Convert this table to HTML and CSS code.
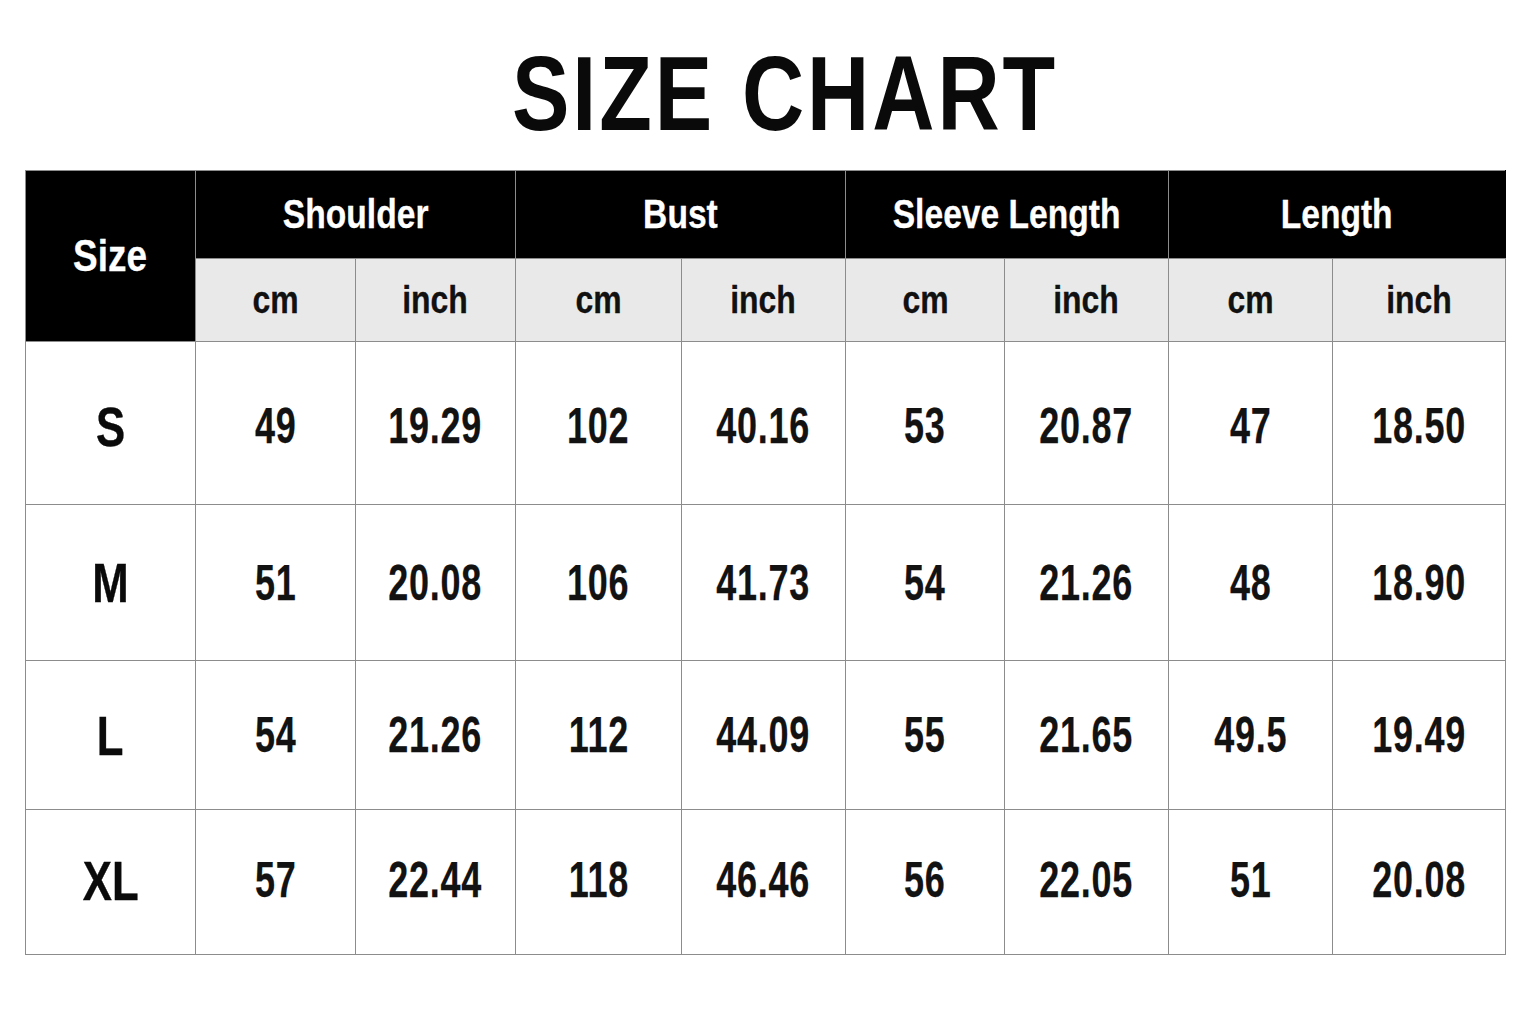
FILE: index.html
```html
<!DOCTYPE html>
<html>
<head>
<meta charset="utf-8">
<link rel="stylesheet" href="styles.css">
</head>
<body>
<div class="page">
  <h1 class="title"><span>SIZE CHART</span></h1>
  <table class="chart">
    <colgroup>
      <col class="c-size"><col class="c1"><col class="c2"><col class="c3"><col class="c4"><col class="c5"><col class="c6"><col class="c7"><col class="c8">
    </colgroup>
    <thead>
      <tr class="h1">
        <th class="size-head" rowspan="2"><span>Size</span></th>
        <th colspan="2" class="group"><span>Shoulder</span></th>
        <th colspan="2" class="group"><span>Bust</span></th>
        <th colspan="2" class="group"><span>Sleeve Length</span></th>
        <th colspan="2" class="group"><span>Length</span></th>
      </tr>
      <tr class="h2">
        <th><span>cm</span></th><th><span>inch</span></th><th><span>cm</span></th><th><span>inch</span></th><th><span>cm</span></th><th><span>inch</span></th><th><span>cm</span></th><th><span>inch</span></th>
      </tr>
    </thead>
    <tbody>
      <tr class="r-s">
        <td class="sz"><span>S</span></td><td><span>49</span></td><td><span>19.29</span></td><td><span>102</span></td><td><span>40.16</span></td><td><span>53</span></td><td><span>20.87</span></td><td><span>47</span></td><td><span>18.50</span></td>
      </tr>
      <tr class="r-m">
        <td class="sz"><span>M</span></td><td><span>51</span></td><td><span>20.08</span></td><td><span>106</span></td><td><span>41.73</span></td><td><span>54</span></td><td><span>21.26</span></td><td><span>48</span></td><td><span>18.90</span></td>
      </tr>
      <tr class="r-l">
        <td class="sz"><span>L</span></td><td><span>54</span></td><td><span>21.26</span></td><td><span>112</span></td><td><span>44.09</span></td><td><span>55</span></td><td><span>21.65</span></td><td><span>49.5</span></td><td><span>19.49</span></td>
      </tr>
      <tr class="r-xl">
        <td class="sz"><span>XL</span></td><td><span>57</span></td><td><span>22.44</span></td><td><span>118</span></td><td><span>46.46</span></td><td><span>56</span></td><td><span>22.05</span></td><td><span>51</span></td><td><span>20.08</span></td>
      </tr>
    </tbody>
  </table>
</div>
</body>
</html>
```

FILE: styles.css
```css
html, body {
  margin: 0;
  padding: 0;
  background: #ffffff;
}
body {
  font-family: "Liberation Sans", Arial, sans-serif;
  font-weight: 700;
  color: #111111;
}
.page {
  width: 1536px;
  height: 1024px;
  padding-top: 41px;
  box-sizing: border-box;
}
.title {
  margin: 0 0 24px 0;
  padding-left: 34px;
  text-align: center;
  font-size: 105px;
  line-height: 105px;
  font-weight: 700;
  color: #0a0a0a;
}
.title span {
  display: inline-block;
  letter-spacing: 3.6px;
  transform: scaleX(0.82);
}
.chart {
  margin-left: 25px;
  width: 1480px;
  border-collapse: collapse;
  table-layout: fixed;
}
.c-size { width: 170px; }
.c1 { width: 160px; }
.c2 { width: 160px; }
.c3 { width: 166px; }
.c4 { width: 164px; }
.c5 { width: 159px; }
.c6 { width: 164px; }
.c7 { width: 164px; }
.c8 { width: 173px; }

.chart th, .chart td {
  padding: 0;
  text-align: center;
  vertical-align: middle;
  border: 1px solid #8c8c8c;
  white-space: nowrap;
}
.chart th span {
  display: inline-block;
  transform: scaleX(0.84);
  -webkit-text-stroke: 0.3px currentColor;
}
.h1 { height: 88px; }
.h2 { height: 83px; }
.size-head {
  background: #000;
  color: #fff;
  font-size: 44px;
  border-color: #000;
}
.group {
  background: #000;
  color: #fff;
  font-size: 40px;
  border-top-color: #000;
  border-bottom-color: #000;
  border-left: 1px solid #d8d8d8;
  border-right: 1px solid #d8d8d8;
  padding-top: 18px;
}
.h1 .group:last-child { border-right-color: #000; }
.h2 th {
  background: #e9e9e9;
  color: #111;
  font-size: 38px;
  border-top-color: #e9e9e9;
  padding-top: 0;
}
.r-s { height: 163px; }
.r-m { height: 156px; }
.r-l { height: 149px; }
.r-xl { height: 145px; }
.chart td {
  font-size: 50px;
  color: #121212;
  padding-top: 0;
}
.r-s td { padding-top: 6px; }
.r-xl td { padding-top: 0; padding-bottom: 4px; }
.chart td span {
  display: inline-block;
  letter-spacing: 1px;
  transform: scaleX(0.72);
  -webkit-text-stroke: 0.25px currentColor;
}
.chart td.sz {
  font-size: 56px;
  color: #0a0a0a;
}
.chart td.sz span {
  letter-spacing: 0;
  transform: scaleX(0.78);
  -webkit-text-stroke: 0.4px currentColor;
}
```
